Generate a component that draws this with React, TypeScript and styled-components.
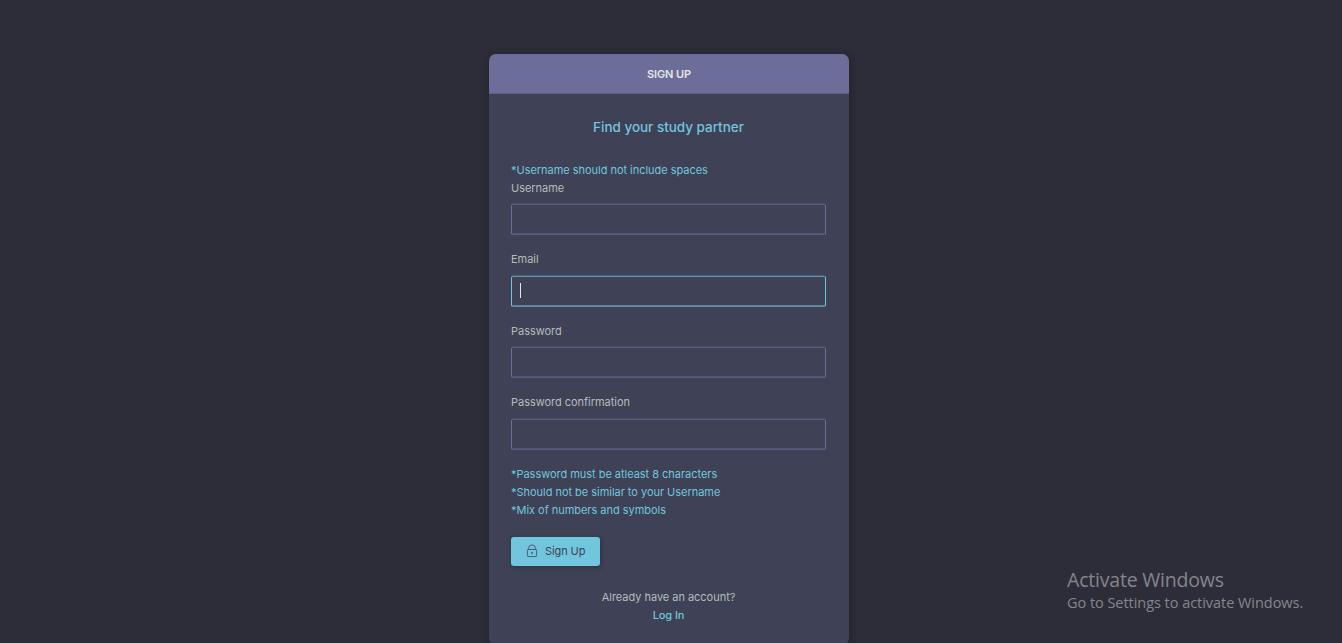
import React from "react";
import styled, { createGlobalStyle } from "styled-components";

const Global = createGlobalStyle`
  * { box-sizing: border-box; }
  html, body { margin: 0; background: #2d2d39; height: 643px; overflow: hidden; }
  body { font-family: Inter, "Liberation Sans", sans-serif; font-size: 11px; line-height: 18px; color: #b2bdbd; }
`;

const Page = styled.main`
  height: 643px;
  padding: 54px 4px 0 0;
  display: flex;
  justify-content: center;
  align-items: flex-start;
`;
const Card = styled.section`
  width: 360px;
  height: 591px;
  background: #3f4156;
  border-radius: 7px;
  overflow: hidden;
  box-shadow: 1px 1px 6px 2px rgba(0, 0, 0, 0.2);
`;
const Header = styled.header`
  height: 40px;
  display: flex;
  align-items: center;
  justify-content: center;
  padding-top: 1px;
  border-bottom: 1px solid #5f6088;
  background: #6d6d9a;
`;
const Body = styled.form`
  padding: 22px 23px 0 22px;
  display: flex;
  flex-direction: column;
`;
const Text = styled.span<{ $track?: number }>`
  letter-spacing: ${(p) => p.$track ?? -0.03}px;
  white-space: nowrap;
`;
const HeaderText = styled(Text)`
  font-weight: 600;
  color: #e5e5e5;
`;
const Title = styled.h2`
  margin: 0 0 23px;
  height: 22px;
  line-height: 22px;
  font-size: 13.5px;
  font-weight: 500;
  text-align: center;
  color: #71c6dd;
`;
const Hint = styled.div`
  height: 18px;
  color: #71c6dd;
`;
const Field = styled.label`
  display: flex;
  flex-direction: column;
  height: 71.6px;
`;
const Label = styled(Text)<{ $raised?: boolean }>`
  height: 18px;
  line-height: ${(p) => (p.$raised ? 17 : 18)}px;
`;
const Frame = styled.div<{ $active?: boolean }>`
  --soft: ${(p) => (p.$active ? "#568399" : "#535376")};
  height: 31px;
  margin-top: 7px;
  padding: 0 8px;
  display: flex;
  align-items: center;
  border: 1px solid ${(p) => (p.$active ? "#71c6dd" : "#6d6d9a")};
  border-top-color: ${(p) => (p.$active ? "#5c94a9" : "#5c5c82")};
  border-bottom-color: ${(p) => (p.$active ? "#5c94a9" : "#5c5c82")};
  border-radius: 2px;
  box-shadow: 0 -1px 0 -0.5px var(--soft), inset 0 -1px 0 var(--soft);
`;
const Input = styled.input`
  width: 100%;
  height: 100%;
  padding: 0;
  border: 0;
  background: transparent;
  color: #e5e5e5;
  outline: none;
`;
const Caret = styled.i`
  width: 1px;
  height: 15px;
  margin-bottom: 1px;
  background: #e5e5e5;
`;
const Button = styled.button`
  width: 89px;
  height: 29px;
  margin: 18px 0 22px;
  padding: 0 0 1px 15px;
  display: flex;
  align-items: center;
  gap: 7px;
  border: 0;
  border-radius: 3px;
  background: #71c6dd;
  color: #3f4156;
  font: inherit;
  box-shadow: 1px 1px 4px 1px rgba(0, 0, 0, 0.2);
`;
const Footer = styled.div`
  text-align: center;
`;
const Login = styled.div`
  color: #71c6dd;
  font-weight: 500;
`;
const Watermark = styled.aside`
  position: absolute;
  left: 1067px;
  top: 566px;
  color: #85858b;
  font-family: "Open Sans", sans-serif;
`;
const WatermarkTitle = styled.div`
  font-size: 19.5px;
  line-height: 27px;
`;
const WatermarkText = styled.div`
  font-size: 14.5px;
  line-height: 20px;
`;

export default function App() {
  return (
    <>
      <Global />
      <Page>
        <Card>
          <Header><HeaderText $track={-0.1}>SIGN UP</HeaderText></Header>
          <Body>
            <Title><Text $track={-0.02}>Find your study partner</Text></Title>
            <Hint><Text>*Username should not include spaces</Text></Hint>
            <Field><Label>Username</Label><Frame><Input /></Frame></Field>
            <Field><Label $raised>Email</Label><Frame $active><Caret /></Frame></Field>
            <Field><Label>Password</Label><Frame><Input type="password" /></Frame></Field>
            <Field><Label $raised>Password confirmation</Label><Frame><Input type="password" /></Frame></Field>
            <Hint><Text>*Password must be atleast 8 characters</Text></Hint>
            <Hint><Text>*Should not be similar to your Username</Text></Hint>
            <Hint><Text>*Mix of numbers and symbols</Text></Hint>
            <Button type="button">
              <svg width="12" height="14" viewBox="0 0 12 14" fill="none" stroke="#3f4156" strokeWidth="0.75">
                <rect x="1.4" y="5.5" width="9.2" height="7" rx="0.6" />
                <path d="M2.6 5.5V4.3a3.4 3.4 0 0 1 6.8 0V5.5" />
                <path d="M6 8v2.4M5.3 8.6h1.4" />
              </svg>
              <Text $track={-0.1}>Sign Up</Text>
            </Button>
            <Footer>
              <Text>Already have an account?</Text>
              <Login><Text $track={-0.1}>Log In</Text></Login>
            </Footer>
          </Body>
        </Card>
      </Page>
      <Watermark>
        <WatermarkTitle><Text $track={-0.2}>Activate Windows</Text></WatermarkTitle>
        <WatermarkText><Text $track={-0.04}>Go to Settings to activate Windows.</Text></WatermarkText>
      </Watermark>
    </>
  );
}
